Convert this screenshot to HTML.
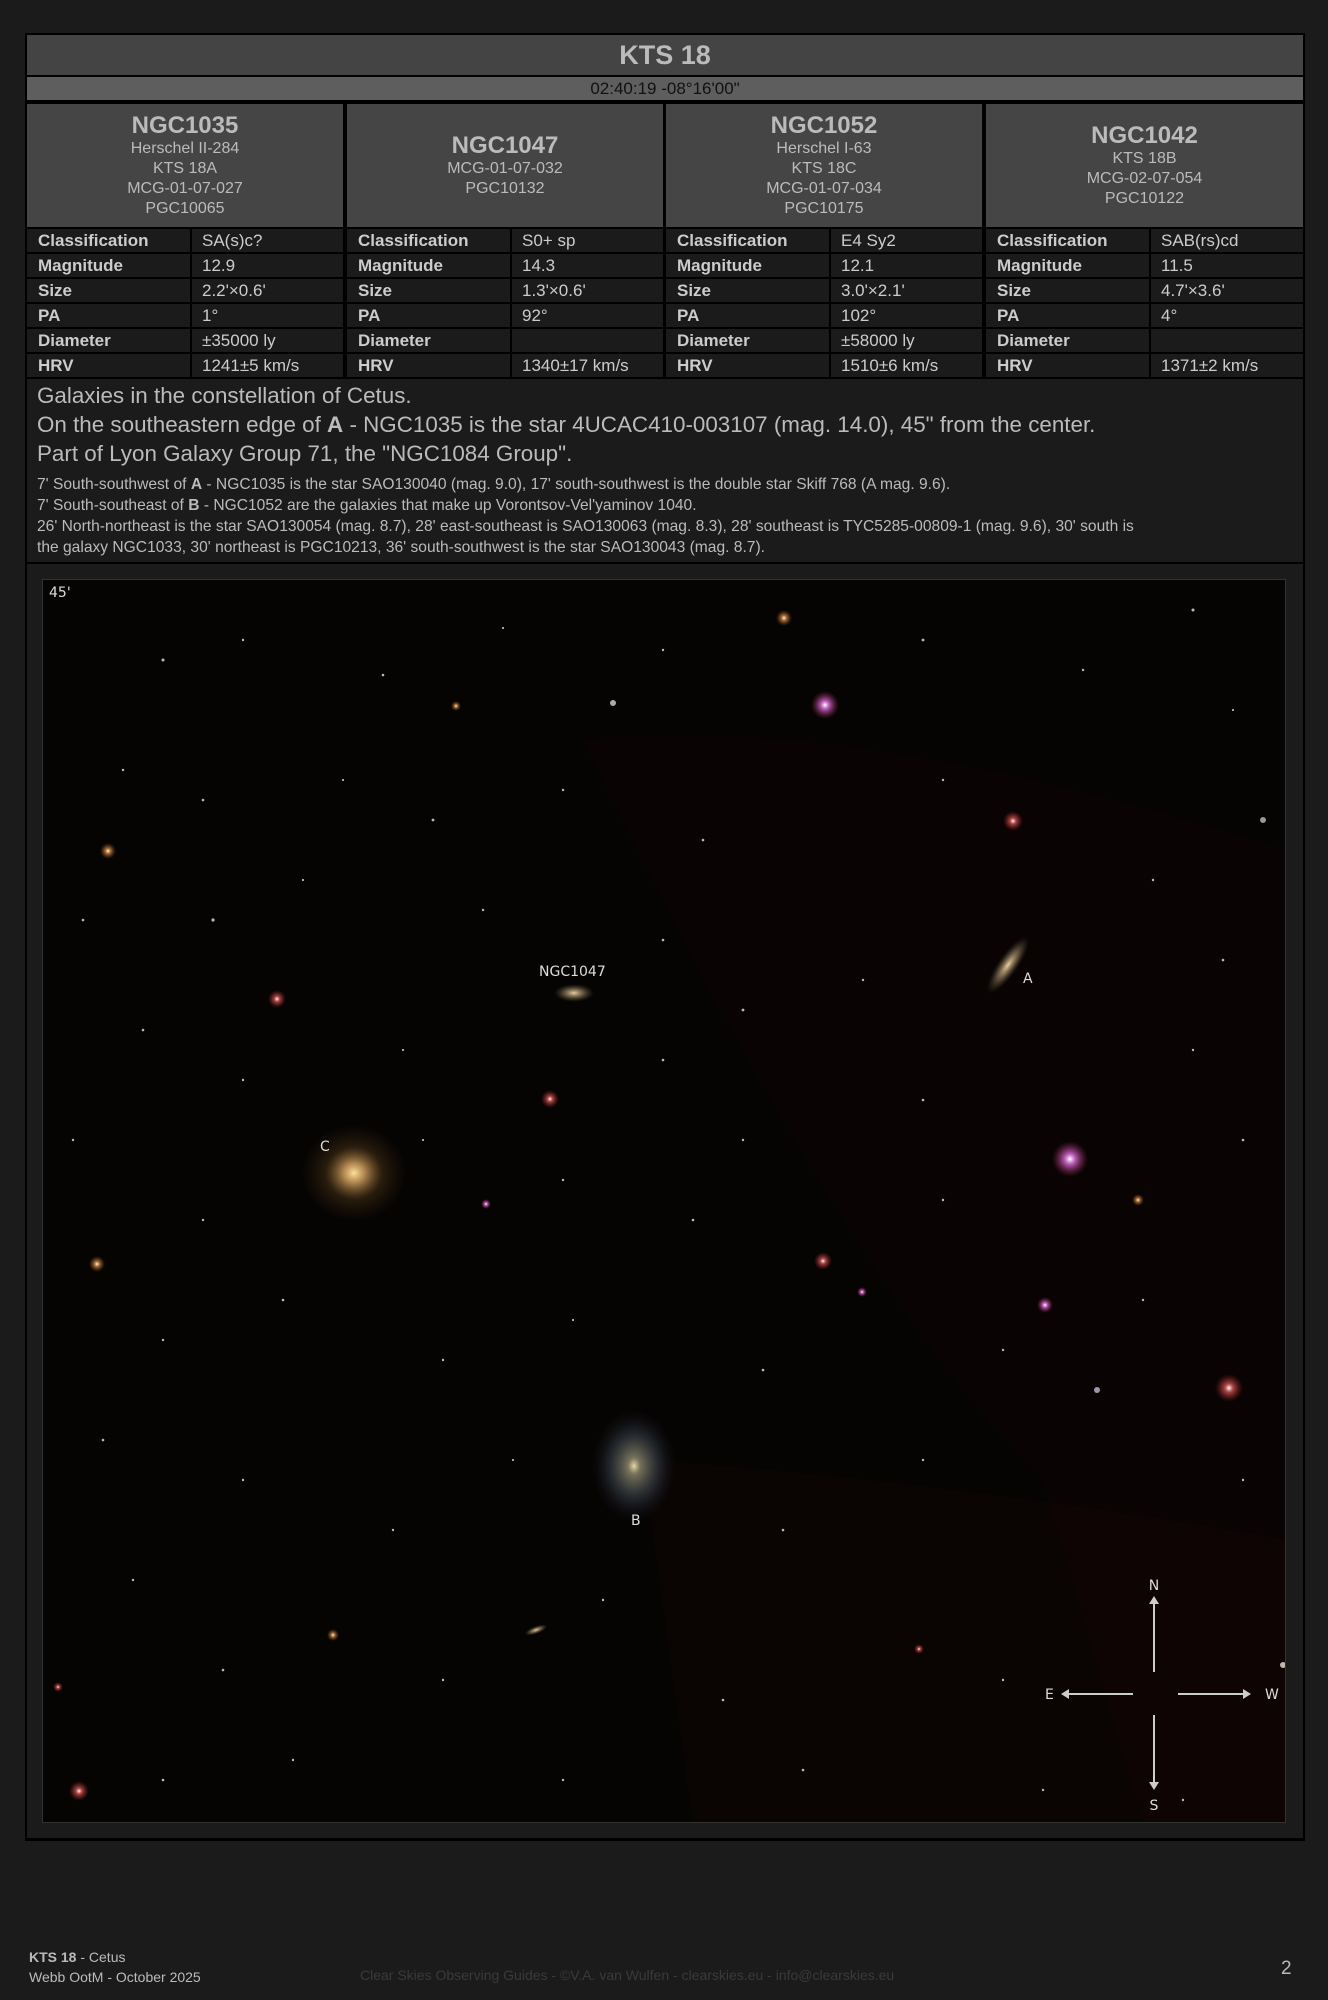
<!DOCTYPE html>
<html><head><meta charset="utf-8">
<style>
*{margin:0;padding:0;box-sizing:border-box}
body{width:1328px;height:2000px;background:#1b1b1b;font-family:"Liberation Sans",sans-serif;color:#ccc;position:relative;overflow:hidden}
.outer{position:absolute;left:25px;top:33px;width:1280px;height:1808px;background:#000}
.abs{position:absolute}
.title{left:27px;top:35px;width:1276px;height:40px;background:#444;color:#bbb;font-weight:bold;font-size:27px;text-align:center;line-height:40px}
.coord{left:27px;top:77px;width:1276px;height:23px;background:#5e5e5e;color:#111;font-size:17px;text-align:center;line-height:23px}
.hd{top:104px;height:123px;background:#454545;color:#bbb;text-align:center;display:flex;flex-direction:column;justify-content:center;font-size:16px;line-height:20px}
.hd b{font-size:24px;line-height:26px;color:#bbb}
.row{height:23px;background:#1b1b1b;font-size:17px;line-height:23px;color:#ccc}
.row .l{position:absolute;left:11px;font-weight:bold}
.row .v{position:absolute;left:163px;top:0;bottom:0;border-left:2px solid #000;padding-left:10px;right:0}
.desc{left:27px;top:379px;width:1276px;height:183px;background:#1b1b1b;padding:2px 10px;color:#bbb}
.desc p.big{font-size:22.4px;line-height:29px}
.desc p.sm{font-size:15.6px;line-height:21px;white-space:nowrap}
.panel{left:27px;top:564px;width:1276px;height:1274px;background:#1b1b1b}
.img{left:42px;top:579px;width:1244px;height:1244px;background:#060403;border:1px solid #333;overflow:hidden}
</style></head><body>
<div class="outer"></div>
<div class="abs title">KTS 18</div>
<div class="abs coord">02:40:19 -08°16'00"</div>

<div class="abs hd" style="left:27px;width:316px"><b>NGC1035</b>Herschel II-284<br>KTS 18A<br>MCG-01-07-027<br>PGC10065</div>
<div class="abs hd" style="left:347px;width:316px"><b>NGC1047</b>MCG-01-07-032<br>PGC10132</div>
<div class="abs hd" style="left:666px;width:316px"><b>NGC1052</b>Herschel I-63<br>KTS 18C<br>MCG-01-07-034<br>PGC10175</div>
<div class="abs hd" style="left:986px;width:317px"><b>NGC1042</b>KTS 18B<br>MCG-02-07-054<br>PGC10122</div>

<div class="abs" style="left:27px;top:229px;width:316px">
<div class="row abs" style="top:0;width:316px"><span class="l">Classification</span><span class="v">SA(s)c?</span></div>
<div class="row abs" style="top:25px;width:316px"><span class="l">Magnitude</span><span class="v">12.9</span></div>
<div class="row abs" style="top:50px;width:316px"><span class="l">Size</span><span class="v">2.2'×0.6'</span></div>
<div class="row abs" style="top:75px;width:316px"><span class="l">PA</span><span class="v">1°</span></div>
<div class="row abs" style="top:100px;width:316px"><span class="l">Diameter</span><span class="v">±35000 ly</span></div>
<div class="row abs" style="top:125px;width:316px"><span class="l">HRV</span><span class="v">1241±5 km/s</span></div>
</div>
<div class="abs" style="left:347px;top:229px;width:316px">
<div class="row abs" style="top:0;width:316px"><span class="l">Classification</span><span class="v">S0+ sp</span></div>
<div class="row abs" style="top:25px;width:316px"><span class="l">Magnitude</span><span class="v">14.3</span></div>
<div class="row abs" style="top:50px;width:316px"><span class="l">Size</span><span class="v">1.3'×0.6'</span></div>
<div class="row abs" style="top:75px;width:316px"><span class="l">PA</span><span class="v">92°</span></div>
<div class="row abs" style="top:100px;width:316px"><span class="l">Diameter</span><span class="v"></span></div>
<div class="row abs" style="top:125px;width:316px"><span class="l">HRV</span><span class="v">1340±17 km/s</span></div>
</div>
<div class="abs" style="left:666px;top:229px;width:316px">
<div class="row abs" style="top:0;width:316px"><span class="l">Classification</span><span class="v">E4 Sy2</span></div>
<div class="row abs" style="top:25px;width:316px"><span class="l">Magnitude</span><span class="v">12.1</span></div>
<div class="row abs" style="top:50px;width:316px"><span class="l">Size</span><span class="v">3.0'×2.1'</span></div>
<div class="row abs" style="top:75px;width:316px"><span class="l">PA</span><span class="v">102°</span></div>
<div class="row abs" style="top:100px;width:316px"><span class="l">Diameter</span><span class="v">±58000 ly</span></div>
<div class="row abs" style="top:125px;width:316px"><span class="l">HRV</span><span class="v">1510±6 km/s</span></div>
</div>
<div class="abs" style="left:986px;top:229px;width:317px">
<div class="row abs" style="top:0;width:317px"><span class="l">Classification</span><span class="v">SAB(rs)cd</span></div>
<div class="row abs" style="top:25px;width:317px"><span class="l">Magnitude</span><span class="v">11.5</span></div>
<div class="row abs" style="top:50px;width:317px"><span class="l">Size</span><span class="v">4.7'×3.6'</span></div>
<div class="row abs" style="top:75px;width:317px"><span class="l">PA</span><span class="v">4°</span></div>
<div class="row abs" style="top:100px;width:317px"><span class="l">Diameter</span><span class="v"></span></div>
<div class="row abs" style="top:125px;width:317px"><span class="l">HRV</span><span class="v">1371±2 km/s</span></div>
</div>

<div class="abs desc">
<p class="big">Galaxies in the constellation of Cetus.</p>
<p class="big">On the southeastern edge of <b>A</b> - NGC1035 is the star 4UCAC410-003107 (mag. 14.0), 45" from the center.</p>
<p class="big" style="margin-bottom:6px">Part of Lyon Galaxy Group 71, the "NGC1084 Group".</p>
<p class="sm">7' South-southwest of <b>A</b> - NGC1035 is the star SAO130040 (mag. 9.0), 17' south-southwest is the double star Skiff 768 (A mag. 9.6).</p>
<p class="sm">7' South-southeast of <b>B</b> - NGC1052 are the galaxies that make up Vorontsov-Vel'yaminov 1040.</p>
<p class="sm">26' North-northeast is the star SAO130054 (mag. 8.7), 28' east-southeast is SAO130063 (mag. 8.3), 28' southeast is TYC5285-00809-1 (mag. 9.6), 30' south is<br>the galaxy NGC1033, 30' northeast is PGC10213, 36' south-southwest is the star SAO130043 (mag. 8.7).</p>
</div>

<div class="abs panel"></div>
<div class="abs img">
<svg width="1244" height="1244" viewBox="0 0 1244 1244" xmlns="http://www.w3.org/2000/svg">
<defs>
<radialGradient id="gC"><stop offset="0" stop-color="#ffe09a"/><stop offset="0.2" stop-color="#d0a060" stop-opacity="0.85"/><stop offset="0.55" stop-color="#7a5526" stop-opacity="0.3"/><stop offset="1" stop-color="#5a3a15" stop-opacity="0"/></radialGradient>
<radialGradient id="gA"><stop offset="0" stop-color="#e8d0a0"/><stop offset="0.5" stop-color="#9a8060" stop-opacity="0.6"/><stop offset="1" stop-color="#443" stop-opacity="0"/></radialGradient>
<radialGradient id="gB"><stop offset="0" stop-color="#e8d8a8"/><stop offset="0.15" stop-color="#a8a080" stop-opacity="0.7"/><stop offset="0.6" stop-color="#506070" stop-opacity="0.35"/><stop offset="1" stop-color="#223" stop-opacity="0"/></radialGradient>
<radialGradient id="sM"><stop offset="0" stop-color="#fff"/><stop offset="0.3" stop-color="#e070e0" stop-opacity="0.8"/><stop offset="1" stop-color="#a02050" stop-opacity="0"/></radialGradient>
<radialGradient id="sR"><stop offset="0" stop-color="#fff"/><stop offset="0.3" stop-color="#f06060" stop-opacity="0.7"/><stop offset="1" stop-color="#a02020" stop-opacity="0"/></radialGradient>
<radialGradient id="sO"><stop offset="0" stop-color="#fff"/><stop offset="0.3" stop-color="#f0a050" stop-opacity="0.7"/><stop offset="1" stop-color="#a05020" stop-opacity="0"/></radialGradient>
</defs>
<path d="M540 160 Q800 130 1244 270 L1244 1244 L1100 1244 L1000 900 Q800 700 540 160Z" fill="#1a0606" opacity="0.15"/>
<path d="M600 880 Q900 900 1244 960 L1244 1244 L650 1244Z" fill="#1e0606" opacity="0.2"/>
<ellipse cx="311" cy="593" rx="52" ry="48" fill="url(#gC)"/>
<ellipse cx="965" cy="385" rx="10" ry="34" fill="url(#gA)" transform="rotate(35 965 385)"/>
<ellipse cx="531" cy="413" rx="20" ry="9" fill="url(#gA)"/>
<ellipse cx="591" cy="886" rx="42" ry="56" fill="url(#gB)"/>
<ellipse cx="493" cy="1050" rx="12" ry="4" fill="url(#gA)" transform="rotate(-20 493 1050)"/>
<g>
<circle cx="782" cy="125" r="14" fill="url(#sM)"/>
<circle cx="970" cy="241" r="10" fill="url(#sR)"/>
<circle cx="1027" cy="579" r="18" fill="url(#sM)"/>
<circle cx="1186" cy="808" r="14" fill="url(#sR)"/>
<circle cx="741" cy="38" r="8" fill="url(#sO)"/>
<circle cx="234" cy="419" r="9" fill="url(#sR)"/>
<circle cx="507" cy="519" r="9" fill="url(#sR)"/>
<circle cx="780" cy="681" r="9" fill="url(#sR)"/>
<circle cx="65" cy="271" r="8" fill="url(#sO)"/>
<circle cx="54" cy="684" r="8" fill="url(#sO)"/>
<circle cx="36" cy="1211" r="10" fill="url(#sR)"/>
<circle cx="1002" cy="725" r="8" fill="url(#sM)"/>
<circle cx="1095" cy="620" r="6" fill="url(#sO)"/>
<circle cx="290" cy="1055" r="6" fill="url(#sO)"/>
<circle cx="876" cy="1069" r="5" fill="url(#sR)"/>
<circle cx="15" cy="1107" r="5" fill="url(#sR)"/>
<circle cx="413" cy="126" r="5" fill="url(#sO)"/>
<circle cx="570" cy="123" r="3" fill="#aaa"/>
<circle cx="443" cy="624" r="5" fill="url(#sM)"/>
<circle cx="819" cy="712" r="5" fill="url(#sM)"/>
<circle cx="1054" cy="810" r="3" fill="#99a"/>
<circle cx="1220" cy="240" r="3" fill="#999"/>
</g>
<g fill="#bba">
<circle cx="120" cy="80" r="1.5"/><circle cx="200" cy="60" r="1.2"/><circle cx="340" cy="95" r="1.3"/><circle cx="460" cy="48" r="1.1"/><circle cx="620" cy="70" r="1.2"/><circle cx="880" cy="60" r="1.4"/><circle cx="1040" cy="90" r="1.2"/><circle cx="1150" cy="30" r="1.5"/><circle cx="1190" cy="130" r="1.1"/>
<circle cx="80" cy="190" r="1.2"/><circle cx="160" cy="220" r="1.3"/><circle cx="300" cy="200" r="1.1"/><circle cx="390" cy="240" r="1.4"/><circle cx="520" cy="210" r="1.2"/><circle cx="660" cy="260" r="1.3"/><circle cx="900" cy="200" r="1.2"/><circle cx="1110" cy="300" r="1.2"/>
<circle cx="40" cy="340" r="1.3"/><circle cx="170" cy="340" r="1.6"/><circle cx="260" cy="300" r="1.1"/><circle cx="440" cy="330" r="1.2"/><circle cx="620" cy="360" r="1.3"/><circle cx="700" cy="430" r="1.4"/><circle cx="820" cy="400" r="1.2"/><circle cx="1180" cy="380" r="1.3"/>
<circle cx="100" cy="450" r="1.3"/><circle cx="200" cy="500" r="1.2"/><circle cx="360" cy="470" r="1.1"/><circle cx="620" cy="480" r="1.3"/><circle cx="700" cy="560" r="1.2"/><circle cx="880" cy="520" r="1.3"/><circle cx="1150" cy="470" r="1.2"/>
<circle cx="30" cy="560" r="1.2"/><circle cx="160" cy="640" r="1.2"/><circle cx="380" cy="560" r="1.1"/><circle cx="520" cy="600" r="1.2"/><circle cx="650" cy="640" r="1.3"/><circle cx="900" cy="620" r="1.2"/><circle cx="1200" cy="560" r="1.3"/>
<circle cx="120" cy="760" r="1.2"/><circle cx="240" cy="720" r="1.3"/><circle cx="400" cy="780" r="1.2"/><circle cx="530" cy="740" r="1.1"/><circle cx="720" cy="790" r="1.3"/><circle cx="960" cy="770" r="1.2"/><circle cx="1100" cy="720" r="1.2"/>
<circle cx="60" cy="860" r="1.3"/><circle cx="200" cy="900" r="1.2"/><circle cx="350" cy="950" r="1.2"/><circle cx="470" cy="880" r="1.1"/><circle cx="740" cy="950" r="1.3"/><circle cx="880" cy="880" r="1.2"/><circle cx="1200" cy="900" r="1.2"/>
<circle cx="90" cy="1000" r="1.2"/><circle cx="180" cy="1090" r="1.3"/><circle cx="400" cy="1100" r="1.2"/><circle cx="560" cy="1020" r="1.2"/><circle cx="680" cy="1120" r="1.3"/><circle cx="960" cy="1100" r="1.2"/><circle cx="1240" cy="1085" r="3"/>
<circle cx="120" cy="1200" r="1.3"/><circle cx="250" cy="1180" r="1.2"/><circle cx="520" cy="1200" r="1.2"/><circle cx="760" cy="1190" r="1.3"/><circle cx="1000" cy="1210" r="1.2"/><circle cx="1140" cy="1220" r="1.2"/>
</g>
<g fill="#ddd" font-family="DejaVu Sans, sans-serif" font-size="14">
<text x="6" y="17">45'</text>
<text x="496" y="396">NGC1047</text>
<text x="980" y="403">A</text>
<text x="277" y="571">C</text>
<text x="588" y="945">B</text>
<text x="1111" y="1010" text-anchor="middle">N</text>
<text x="1002" y="1119">E</text>
<text x="1222" y="1119">W</text>
<text x="1111" y="1230" text-anchor="middle">S</text>
</g>
<g stroke="#ccc" stroke-width="2" fill="#ccc">
<line x1="1111" y1="1092" x2="1111" y2="1022"/><path d="M1106 1024 L1111 1016 L1116 1024Z" stroke="none"/>
<line x1="1090" y1="1114" x2="1024" y2="1114"/><path d="M1026 1109 L1018 1114 L1026 1119Z" stroke="none"/>
<line x1="1135" y1="1114" x2="1202" y2="1114"/><path d="M1200 1109 L1208 1114 L1200 1119Z" stroke="none"/>
<line x1="1111" y1="1135" x2="1111" y2="1204"/><path d="M1106 1202 L1111 1210 L1116 1202Z" stroke="none"/>
</g>
</svg>
</div>

<div class="abs" style="left:29px;top:1947px;font-size:14px;color:#bbb;line-height:20px"><b>KTS 18</b> - Cetus<br>Webb OotM - October 2025</div>
<div class="abs" style="left:360px;top:1967px;font-size:14px;color:#3a3a3a">Clear Skies Observing Guides - ©V.A. van Wulfen - clearskies.eu - info@clearskies.eu</div>
<div class="abs" style="left:1281px;top:1958px;font-size:19px;color:#bbb">2</div>
</body></html>
